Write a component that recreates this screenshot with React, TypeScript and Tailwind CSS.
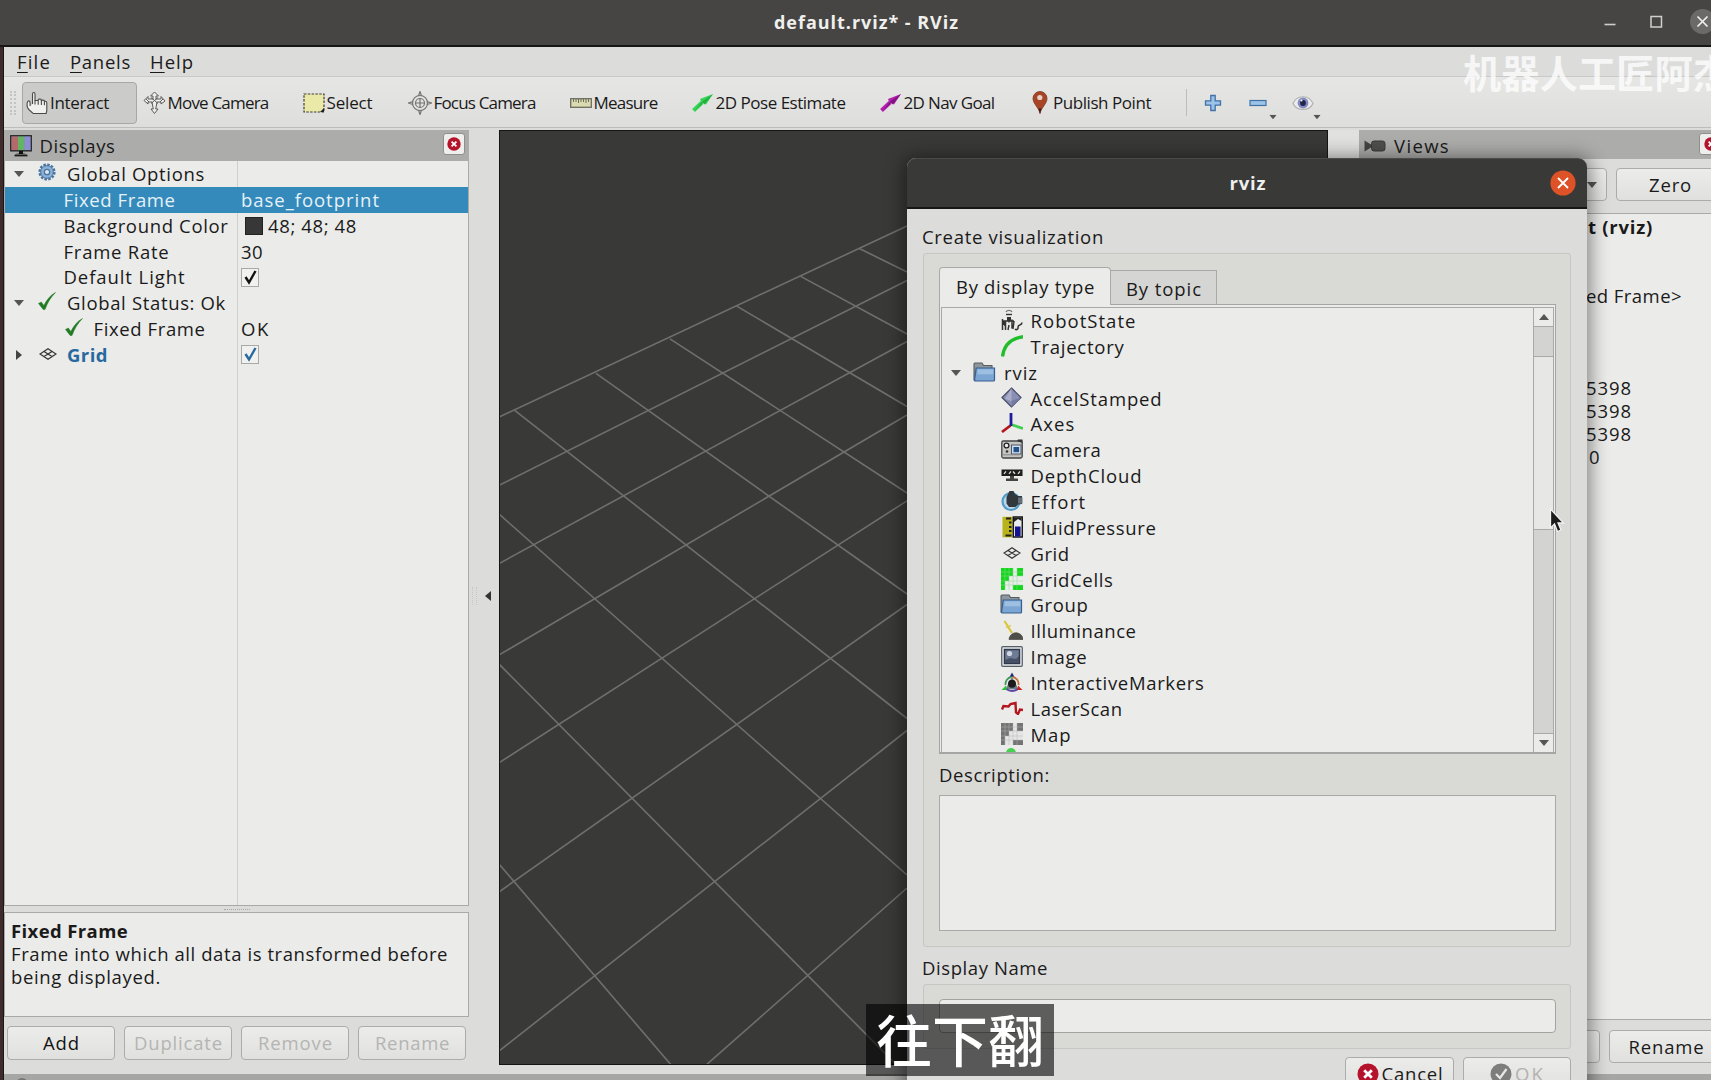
import { useLayoutEffect, useRef, useState } from "react";
import type { ReactNode } from "react";

/** Single-line label whose tracking is adjusted so that it spans a given width. */
function Fit({ w, className = "", children }: { w: number; className?: string; children: ReactNode }) {
  const ref = useRef<HTMLSpanElement>(null);
  const [spacing, setSpacing] = useState(0);
  useLayoutEffect(() => {
    const el = ref.current;
    if (!el) return;
    const count = (el.textContent || "").length;
    if (count > 0) setSpacing((w + 1 - el.getBoundingClientRect().width) / count);
  }, [w]);
  return (
    <span className={"block shrink-0 whitespace-pre " + className} style={{ width: w }}>
      <span ref={ref} className="inline-block" style={{ letterSpacing: spacing }}>
        {children}
      </span>
    </span>
  );
}

const ICON = "block shrink-0";

const HandIcon = () => (
  <svg className={ICON} width="22" height="24" viewBox="0 0 22 24" fill="#f0f0ee" stroke="#4a4a4a" strokeWidth="1.1" strokeLinejoin="round">
    <path d="M6.500 13V3.200C6.500 1 9 1 9 3.200V9.500h3.200v-.8c0-.8 3-.8 3 0v1h.400c0-1 2.800-.8 2.800.2v.5c1-.4 2.400 0 2.400 1.600v7c0 2-.6 2-.6 3.500H7.200C6 21 3 20 1.500 16.500c-.8-2.500-.5-6 .8-6.500 1.200-.400 1.800.500 1.800 2v3" />
    <path d="M9 9.500v4M12.200 9.700v4M15.400 10v4M18.400 10.700v3.500" fill="none" />
  </svg>
);
const MoveIcon = () => (
  <svg className={ICON} width="23" height="23" viewBox="0 0 23 23" fill="#eee" stroke="#5c5c5c" strokeWidth="1" strokeLinejoin="round">
    <path d="M11.500 1l4 4h-2.500v3h5V5.500l4 4.500-4 3V11H14l-1.300 7H15l-3.500 4.500L8 18h2.300L9 11H5v2L1 9.500 5 5.500V8h5V5H7.500z" />
    <path d="M8 6.500l7 6M15 6.500l-7 6M3 8l3 3M20 8l-3 3" fill="none" />
  </svg>
);
const SelectIcon = () => (
  <svg className={ICON} width="22" height="20" viewBox="0 0 22 20">
    <rect x="1" y="1" width="20" height="18" fill="#ebe9a8" stroke="#3c3c3c" strokeWidth="1.200" strokeDasharray="2.500 1.300" />
    <path d="M21 15v4h-4z" fill="#222" />
  </svg>
);
const FocusIcon = () => (
  <svg className={ICON} width="24" height="24" viewBox="0 0 24 24" fill="none" stroke="#747474" strokeWidth="1.200">
    <circle cx="12" cy="12" r="7.500" />
    <circle cx="12" cy="12" r="4.500" />
    <path d="M12 7v10M7 12h10M10.500 5L12 .5 13.500 5M10.500 19l1.500 4.500 1.500-4.500M5 10.500L.5 12 5 13.500M19 10.500l4.500 1.500-4.500 1.500" />
  </svg>
);
const RulerIcon = () => (
  <svg className={ICON} width="22" height="10" viewBox="0 0 22 10">
    <rect x=".7" y=".7" width="20.600" height="8.600" fill="#dadbb0" stroke="#6d6d60" strokeWidth="1.300" />
    <path d="M3.500 1v3M6 1v3M8.500 1v4M11 1v3M13.500 1v3M16 1v4M18.500 1v3" stroke="#6d6d60" strokeWidth="1" />
  </svg>
);
const ArrowIcon = ({ dark, light }: { dark: string; light: string }) => (
  <svg className={ICON} width="22" height="19" viewBox="0 0 22 19">
    <path d="M1.500 17.500L10 9.500" stroke={light} strokeWidth="4" />
    <path d="M8 6L21 1l-7 10.500-2-1-3-2z" fill={light} />
    <path d="M2.500 18.200L11 10l1.500 1.500L21 1 10 8.500z" fill={dark} opacity=".75" />
  </svg>
);
const PinIcon = () => (
  <svg className={ICON} width="16" height="23" viewBox="0 0 16 23">
    <path d="M8 22.500C7 17 1 12.500 1 7.500a7 7 0 0114 0C15 12.500 9 17 8 22.500z" fill="#a84526" stroke="#7c3520" strokeWidth=".8" />
    <path d="M6.500 17.500h3L8 22.500z" fill="#3b1c14" />
    <circle cx="7.800" cy="6.500" r="2.600" fill="#e7cfc8" />
  </svg>
);
const PlusIcon = () => (
  <svg className={ICON} width="18" height="18" viewBox="0 0 18 18">
    <path d="M6.800 1.500h4.400v5.300h5.300v4.400h-5.300v5.300H6.800v-5.300H1.500V6.800h5.300z" fill="#9cc3e8" stroke="#4272a5" strokeWidth="1.300" />
  </svg>
);
const MinusIcon = () => (
  <svg className={ICON} width="18" height="8" viewBox="0 0 18 8">
    <rect x="1" y="1.500" width="16" height="5" fill="#9cc3e8" stroke="#4272a5" strokeWidth="1.200" />
  </svg>
);
const EyeIcon = () => (
  <svg className={ICON} width="22" height="16" viewBox="0 0 22 16">
    <path d="M1 8.500C5-.5 17-.5 21 8.500 17 16.500 5 16.500 1 8.500z" fill="#ececec" stroke="#b0b0b0" strokeWidth="1.200" />
    <circle cx="11" cy="8" r="5.400" fill="#8288c0" />
    <circle cx="11" cy="8" r="2.900" fill="#22264a" />
    <circle cx="9.500" cy="5.600" r="1" fill="#fff" />
  </svg>
);
const Caret = ({ className = "" }: { className?: string }) => (
  <svg className={"block shrink-0 " + className} width="10" height="6" viewBox="0 0 10 6">
    <path d="M0 0h10L5 6z" fill="#555" />
  </svg>
);
const MonitorIcon = () => (
  <svg className={ICON} width="22" height="22" viewBox="0 0 22 22">
    <rect x=".8" y=".8" width="20.400" height="15" fill="#7f7fb4" stroke="#222" strokeWidth="1.400" />
    <rect x="1.500" y="1.500" width="6.500" height="13.600" fill="#b36a6a" />
    <rect x="8" y="1.500" width="6.500" height="13.600" fill="#63b463" />
    <rect x="14.500" y="1.500" width="6" height="13.600" fill="#8d8dd2" />
    <path d="M9 16h4v2.500c3 0 4.500 1 4.500 1H4.500S6 18.500 9 18.500z" fill="#111" />
    <path d="M4.500 20.700h13" stroke="#111" strokeWidth="1.300" />
  </svg>
);
const GearIcon = () => (
  <svg className={ICON} width="18" height="18" viewBox="0 0 18 18">
    <circle cx="9" cy="9" r="7.300" fill="none" stroke="#48759f" strokeWidth="2.600" strokeDasharray="2.500 1.320" />
    <circle cx="9" cy="9" r="6.300" fill="#8db1d8" stroke="#48759f" strokeWidth="1" />
    <circle cx="9" cy="9" r="2.700" fill="#dce6ef" stroke="#48759f" strokeWidth="1.300" />
  </svg>
);
const TickIcon = () => (
  <svg className={ICON} width="18" height="18" viewBox="0 0 18 18">
    <path d="M.5 11.500l2.800-1.500 2.500 3.500C9 7.500 12.500 3 17.500.5 13 5 9.500 10.500 7 17.500H5.200z" fill="#217a24" stroke="#217a24" strokeWidth=".5" />
  </svg>
);
const GridIcon = () => (
  <svg className={ICON} width="18" height="12" viewBox="0 0 18 12" fill="none" stroke="#333" strokeWidth="1.200">
    <path d="M9 .800L17 6 9 11.200 1 6zM5 3.400l8 5.200M13 3.400L5 8.600" />
  </svg>
);
const CloseDot = ({ size }: { size: number }) => (
  <svg className={ICON} width={size} height={size} viewBox="0 0 22 22">
    <circle cx="11" cy="11" r="10.500" fill="#b5122b" />
    <path d="M7.200 7.200l7.600 7.600M14.800 7.200l-7.600 7.600" stroke="#fff" strokeWidth="2.800" />
  </svg>
);
const CamcorderIcon = () => (
  <svg className={ICON} width="22" height="14" viewBox="0 0 22 14">
    <path d="M.5 1.500l6.500 4v3l-6.500 4z" fill="#444" />
    <rect x="7.500" y="2" width="13.500" height="10" rx="2.500" fill="#4f4f4d" stroke="#3a3a3a" />
  </svg>
);
const FolderIcon = () => (
  <svg className={ICON} width="23" height="20" viewBox="0 0 23 20">
    <path d="M1 18.500V2c0-.6.400-1 1-1h7l1.500 2.500H19V8" fill="#8f969c" stroke="#555c62" strokeWidth="1.100" />
    <path d="M3.200 6h18.300v12c0 .6-.4 1-1 1H3c-1 0-1.500-.5-1.500-.5z" fill="#7ba6d4" stroke="#355f8e" strokeWidth="1.200" />
    <path d="M4.500 7.300h15.800v5H4.500z" fill="#9dbfe2" />
  </svg>
);

const rowIcons: Record<string, ReactNode> = {
  RobotState: (
    <svg width="22" height="22" viewBox="0 0 22 22" fill="none" stroke="#333" strokeWidth="1.500">
      <path d="M5 3C6 .8 10 .8 11 3" stroke="#777" strokeWidth="1.300" />
      <path d="M5 5.500h6" strokeWidth="1.400" />
      <path d="M1.500 10v11M4.500 12v9M8 8.500v5M11 10.500v9M13 12l-1 8M2 12h11M3 16h2M8 16l-1 5M14 20c1.500 1.500 3.500 0 3-2 0-3 4-1 4-4.500" />
      <path d="M6 8h4v4H6zM1 12h3v4H1z" fill="#333" stroke="none" />
    </svg>
  ),
  Trajectory: (
    <svg width="22" height="22" viewBox="0 0 22 22" fill="none">
      <path d="M1.500 21.500C3 10.500 9 3.500 22 1.800" stroke="#22bd2b" strokeWidth="3.400" />
    </svg>
  ),
  AccelStamped: (
    <svg width="22" height="22" viewBox="0 0 22 22">
      <path d="M10.500 1L20 10.500 10.500 20 1 10.500z" fill="#8a8fb4" stroke="#454a63" strokeWidth="1.200" />
      <path d="M10.500 1L4 12l6.500 2z" fill="#a9adca" />
      <path d="M10.500 14L20 10.500 10.500 20z" fill="#747aa3" />
    </svg>
  ),
  Axes: (
    <svg width="22" height="22" viewBox="0 0 22 22" fill="none" strokeWidth="2.800">
      <path d="M9.500 13.500L1 20" stroke="#b5141d" />
      <path d="M10 12.500L22 16.500" stroke="#42ce4e" />
      <path d="M10 1v13" stroke="#1d1d9c" />
    </svg>
  ),
  Camera: (
    <svg width="22" height="20" viewBox="0 0 22 20">
      <rect x=".8" y="2" width="20.400" height="17" rx="1.500" fill="#c4c6c4" stroke="#444" strokeWidth="1.300" />
      <path d="M16 2l1-1.500h4.500V4z" fill="#333" />
      <circle cx="5.500" cy="6.500" r="2.400" fill="#eee" stroke="#222" strokeWidth="1.300" />
      <circle cx="6" cy="12.500" r="1.300" fill="#333" />
      <rect x="10.500" y="6" width="9.500" height="9" fill="#cfe1ee" stroke="#556" />
      <rect x="12.500" y="8" width="5.600" height="5.200" fill="#23528c" />
      <path d="M2 15.800h17" stroke="#888" />
    </svg>
  ),
  DepthCloud: (
    <svg width="22" height="13" viewBox="0 0 22 13">
      <rect x=".5" y=".5" width="21" height="6.500" fill="#1d1d1d" />
      <path d="M3 4.800l2-2.500M8 4.800l2-2.500M12 2.500l2 2.300M17 4.800l2-2.500" stroke="#ddd" strokeWidth="1.300" />
      <path d="M9 7h4v2.500h4V12H5V9.500h4z" fill="#444" />
    </svg>
  ),
  Effort: (
    <svg width="22" height="22" viewBox="0 0 22 22">
      <circle cx="10" cy="11.500" r="8.500" fill="#b9d7e8" stroke="#4f9ccb" strokeWidth="2.200" />
      <path d="M7 4l1.500-3h4l1.500 3 3 2h4v8l-4 .5-2.500 2.500h-6.500L5.500 13.500V7z" fill="#33383c" />
      <path d="M17 7.500h4.500v6H17z" fill="#65727b" />
    </svg>
  ),
  FluidPressure: (
    <svg width="22" height="22" viewBox="0 0 22 22">
      <rect x="1.500" y=".8" width="10" height="20.500" fill="#b9b31b" />
      <path d="M5 2.500h5M8 6.500h2.500M8 11h2.500M8 15h2.500M4.500 19.500h6" stroke="#222" strokeWidth="2" />
      <rect x="12.300" y="1" width="9" height="20" fill="#e9e9ee" stroke="#181818" strokeWidth="1.500" />
      <rect x="14" y="10.500" width="5.600" height="10" fill="#14148f" />
      <path d="M13 1.500h7.600v3.500L17 3l-4 3z" fill="#222" />
    </svg>
  ),
  Grid: <GridIcon />,
  GridCells: (
    <svg width="22" height="22" viewBox="0 0 22 22">
      <rect width="22" height="22" fill="#e8efe8" />
      <path d="M0 0h12v8H8v5H4v9H0zM16 0h6v8h-6zM12 17h10v5H12z" fill="#12d91c" />
      <path d="M4 0v22M8 0v22M12 0v22M16 0v22M0 4h22M0 8h22M0 13h22M0 17h22" stroke="#9ccf9f" strokeWidth=".7" opacity=".7" />
    </svg>
  ),
  Group: <FolderIcon />,
  Illuminance: (
    <svg width="22" height="20" viewBox="0 0 22 20">
      <path d="M3.500 1L11 13" stroke="#d9c63c" strokeWidth="2.200" />
      <path d="M5 7.500l5-2" stroke="#d9c63c" strokeWidth="1.200" />
      <path d="M8 19.500c0-2 1.500-5 4-6 1.500-1 4-1 6 0 2 .8 4 3 4 6z" fill="#4f4f4a" stroke="#3a3a36" strokeWidth=".6" />
    </svg>
  ),
  Image: (
    <svg width="22" height="21" viewBox="0 0 22 21">
      <rect x=".7" y=".7" width="20.600" height="19.600" rx="1" fill="#dfe2e6" stroke="#555d66" strokeWidth="1.200" />
      <rect x="3.500" y="3.500" width="15" height="14" fill="#6f7b94" stroke="#2f3846" strokeWidth="1.400" />
      <circle cx="8.500" cy="7.500" r="2.600" fill="#cfd7e4" />
      <path d="M4 14l5-2 6 1 3-3v7H4z" fill="#454f65" />
    </svg>
  ),
  InteractiveMarkers: (
    <svg width="22" height="20" viewBox="0 0 22 20" fill="none">
      <path d="M11 .5L8.500 5h5z" fill="#23237c" />
      <path d="M11 5L4.500 17h13z" fill="#6f7f86" />
      <path d="M4.500 13a7 7 0 016-8" stroke="#3f9a5c" strokeWidth="1.800" />
      <path d="M17.500 13a7 7 0 00-6-8" stroke="#c2743c" strokeWidth="1.800" />
      <path d="M5 17c4 2.500 8 2.500 12 0" stroke="#5b46a0" strokeWidth="2" />
      <circle cx="11" cy="11.800" r="4" fill="#1b1b1b" />
      <path d="M5 13.500l-4.500 4.500h5z" fill="#24c531" />
      <path d="M17 13.500l4.500 4.500h-5z" fill="#d22020" />
    </svg>
  ),
  LaserScan: (
    <svg width="22" height="14" viewBox="0 0 22 14" fill="none" stroke="#b3161d" strokeWidth="2.400">
      <path d="M1 8.500L2.500 5l5 .5 2-2.500 5-1 .5 9.500 2 1.500 2-4.500 3 .5" />
    </svg>
  ),
  Map: (
    <svg width="22" height="22" viewBox="0 0 22 22">
      <rect width="22" height="22" fill="#e6e6e6" />
      <path d="M0 0h12v8H8v5H4v9H0zM16 0h6v8h-6zM12 17h10v5H12z" fill="#747474" />
      <path d="M4 0v22M8 0v22M12 0v22M16 0v22M0 4h22M0 8h22M0 13h22M0 17h22" stroke="#b5b5b5" strokeWidth=".7" opacity=".7" />
    </svg>
  ),
};

const tools: { label: string; w: number; gap: number; icon: ReactNode; iconBox: string; width: string }[] = [
  { label: "Move Camera", w: 100, gap: 3, icon: <MoveIcon />, iconBox: "w-[23px]", width: "w-[160px]" },
  { label: "Select", w: 45, gap: 3, icon: <SelectIcon />, iconBox: "w-[22px]", width: "w-[105px]" },
  { label: "Focus Camera", w: 101, gap: 3, icon: <FocusIcon />, iconBox: "w-[24px]", width: "w-[162px]" },
  { label: "Measure", w: 63, gap: 3, icon: <RulerIcon />, iconBox: "w-[22px]", width: "w-[122px]" },
  { label: "2D Pose Estimate", w: 129, gap: 3, icon: <ArrowIcon dark="#1fa63a" light="#35d455" />, iconBox: "w-[22px]", width: "w-[188px]" },
  { label: "2D Nav Goal", w: 90, gap: 3, icon: <ArrowIcon dark="#6d0f6b" light="#b31fb0" />, iconBox: "w-[22px]", width: "w-[152px]" },
  { label: "Publish Point", w: 97, gap: 6, icon: <PinIcon />, iconBox: "w-[16px]", width: "w-[154px]" },
];

const items: [string, number][] = [
  ["AccelStamped", 131], ["Axes", 44], ["Camera", 70], ["DepthCloud", 111], ["Effort", 55],
  ["FluidPressure", 125], ["Grid", 38], ["GridCells", 82], ["Group", 57], ["Illuminance", 105],
  ["Image", 56], ["InteractiveMarkers", 173], ["LaserScan", 91], ["Map", 40],
];

const cellLines = [
  [0, 286, 408, 95], [0, 354.4, 408, 149.500], [0, 432.600, 408, 210.500], [0, 524, 408, 284],
  [0, 631.800, 408, 369.800], [0, 760.900, 408, 473.500], [0, 920, 408, 599.500], [206, 935, 408, 757],
  [360.300, 117.500, 408, 141], [301.700, 145.400, 408, 203], [237.700, 175.100, 408, 275.500],
  [171, 207.800, 408, 362], [97, 242.400, 408, 463], [15.700, 279.300, 408, 587.500],
  [0, 383, 408, 744], [0, 533, 408, 944.500], [0, 733, 173, 935],
];

function Item({ name, w }: { name: string; w: number }) {
  return (
    <div className="flex h-[25.86px] items-center pl-[58px]">
      <span className="flex w-[23px] shrink-0 -translate-y-px justify-center">{rowIcons[name]}</span>
      <Fit w={w} className="ml-[7.5px]">{name}</Fit>
    </div>
  );
}

function Checkbox({ color }: { color: string }) {
  return (
    <span className="flex h-[19px] w-[18px] items-center justify-center border border-[#a9a9a7] bg-[#f1f1ef]">
      <svg width="13" height="15" viewBox="0 0 13 15" fill="none" stroke={color} strokeWidth="2.400">
        <path d="M1.500 7l3.500 5.500L11.500 1" />
      </svg>
    </span>
  );
}

function Row({ left, right, selected = false }: { left: ReactNode; right?: ReactNode; selected?: boolean }) {
  return (
    <div className={"flex h-[25.86px] shrink-0 " + (selected ? "bg-[#348abb] text-[#e6f1f7]" : "")}>
      <div className={"flex w-[233px] shrink-0 items-center border-r " + (selected ? "border-[#348abb]" : "border-[#cfcfcd]")}>{left}</div>
      <div className="flex flex-1 items-center pl-[3px]">{right}</div>
    </div>
  );
}

const btn = "flex items-center justify-center rounded-[4px] border border-[#acacaa] bg-gradient-to-b from-[#ececea] to-[#e0e0de]";

function MainTree() {
  return (
    <div className="flex h-[745px] flex-col border border-t-0 border-[#a9a9a7] bg-[#ebebe9]">
      <Row left={<><Caret className="ml-[9px]" /><span className="ml-[14px] flex -translate-y-0.5"><GearIcon /></span><Fit w={137} className="ml-[11px]">Global Options</Fit></>} />
      <Row selected left={<Fit w={111} className="ml-[58.5px]">Fixed Frame</Fit>} right={<Fit w={138}>base_footprint</Fit>} />
      <Row left={<Fit w={164} className="ml-[58.5px]">Background Color</Fit>} right={<><span className="ml-[4px] size-[18px] border border-[#222] bg-[#373737]" /><Fit w={88} className="ml-[5px]">48; 48; 48</Fit></>} />
      <Row left={<Fit w={105} className="ml-[58.5px]">Frame Rate</Fit>} right={<Fit w={21}>30</Fit>} />
      <Row left={<Fit w={121} className="ml-[58.5px]">Default Light</Fit>} right={<Checkbox color="#111" />} />
      <Row left={<><Caret className="ml-[9px]" /><span className="ml-[14px] flex -translate-y-0.5"><TickIcon /></span><Fit w={158} className="ml-[11px]">Global Status: Ok</Fit></>} />
      <Row left={<><span className="ml-[60px] flex -translate-y-0.5"><TickIcon /></span><Fit w={111} className="ml-[10.5px]">Fixed Frame</Fit></>} right={<Fit w={28}>OK</Fit>} />
      <Row
        left={<>
          <svg className="ml-[11px] shrink-0" width="6" height="10" viewBox="0 0 6 10"><path d="M0 0l6 5-6 5z" fill="#444" /></svg>
          <span className="ml-[17px] flex -translate-y-px"><GridIcon /></span>
          <Fit w={40} className="ml-[10px] font-bold text-[#27699f]">Grid</Fit>
        </>}
        right={<Checkbox color="#27699f" />}
      />
      <div className="w-[233px] flex-1 border-r border-[#cfcfcd]" />
    </div>
  );
}

function DisplaysDock() {
  return (
    <section className="flex w-[465px] shrink-0 flex-col">
      <header className="flex h-[31px] items-center bg-[#acacaa] pl-[6px] pr-1">
        <MonitorIcon />
        <Fit w={75} className="ml-[7.5px]">Displays</Fit>
        <span className="-mt-1 ml-auto flex h-[22px] w-[22px] items-center justify-center rounded-[3px] border border-[#8f8f8d] bg-[#eeeeec]">
          <CloseDot size={14} />
        </span>
      </header>
      <MainTree />
      <div className="flex h-[6px] items-center justify-center">
        <div className="h-px w-[26px] border-t border-dotted border-[#a8a8a6]" />
      </div>
      <div className="h-[105px] border border-[#a9a9a7] bg-[#ebebe9] pl-[6px] pt-[6px] leading-[23px]">
        <Fit w={116} className="font-bold">Fixed Frame</Fit>
        <Fit w={436}>Frame into which all data is transformed before</Fit>
        <Fit w={149}>being displayed.</Fit>
      </div>
      <div className="mt-[9px] flex gap-[9px] pl-[3px] text-[#b4b4b2]">
        <div className={btn + " h-[34px] w-[108px] text-[#141414]"}><Fit w={36}>Add</Fit></div>
        <div className={btn + " h-[34px] w-[108px]"}><Fit w={88}>Duplicate</Fit></div>
        <div className={btn + " h-[34px] w-[108px]"}><Fit w={74}>Remove</Fit></div>
        <div className={btn + " h-[34px] w-[108px]"}><Fit w={74}>Rename</Fit></div>
      </div>
    </section>
  );
}

function ViewsDock() {
  return (
    <section className="flex w-[352px] shrink-0 flex-col">
      <header className="flex h-[29px] items-center bg-[#acacaa] pl-[5px] pt-0.5">
        <CamcorderIcon />
        <Fit w={55} className="ml-[8px]">Views</Fit>
        <span className="-mt-1 ml-auto -mr-[12px] flex h-[22px] w-[24px] shrink-0 items-center justify-center rounded-[3px] border border-[#8f8f8d] bg-[#eeeeec]">
          <CloseDot size={14} />
        </span>
      </header>
      <div className="flex h-[54px] gap-[9px] pt-[9px]">
        <div className={btn + " h-[33px] w-[248px] shrink-0 justify-end! pr-[9px]"}><Caret /></div>
        <div className={btn + " h-[33px] w-[108px] shrink-0"}><Fit w={42}>Zero</Fit></div>
      </div>
      <div className="h-[807px] border-y border-[#a9a9a7] bg-[#ebebe9] pl-[227px] pt-px leading-[23px]">
        <div className="h-[69px]"><Fit w={64} className="ml-[2px] font-bold">t (rviz)</Fit></div>
        <div className="h-[92px]"><Fit w={95}>{"ed Frame>"}</Fit></div>
        <Fit w={45}>5398</Fit>
        <Fit w={45}>5398</Fit>
        <Fit w={45}>5398</Fit>
        <Fit w={10} className="ml-[3px]">0</Fit>
      </div>
      <div className="flex gap-[9px] pt-[10px]">
        <div className={btn + " h-[33px] w-[241px] shrink-0"} />
        <div className={btn + " h-[33px] w-[114px] shrink-0"}><Fit w={75}>Rename</Fit></div>
      </div>
    </section>
  );
}

function Viewport() {
  return (
    <div className="h-[935px] w-[829px] shrink-0 overflow-hidden border border-[#151515] bg-[#393937]">
      <svg className="-ml-px" width="827" height="934" viewBox="0 0 827 934" stroke="#6f6f6d" strokeWidth="1.600">
        {cellLines.map(([x1, y1, x2, y2], i) => (
          <line key={i} x1={x1} y1={y1} x2={x2} y2={y2} />
        ))}
      </svg>
    </div>
  );
}

function Dialog() {
  return (
    <div className="absolute left-[907px] top-[158px] flex h-[940px] w-[680px] flex-col rounded-t-[9px] bg-[#dcdcdb] shadow-[0_2px_18px_4px_rgba(0,0,0,0.42)]">
      <header className="flex h-[51px] shrink-0 items-center justify-center rounded-t-[9px] border-b-2 border-t border-b-[#161616] border-t-[#4a4a48] bg-[#393937] text-[#efefed]">
        <Fit w={36} className="ml-[1px] font-bold">rviz</Fit>
        <svg className="absolute right-[11px] top-[12px]" width="26" height="26" viewBox="0 0 26 26">
          <circle cx="13" cy="13" r="12.600" fill="#dd5226" />
          <path d="M8 8l10 10M18 8L8 18" stroke="#fff" strokeWidth="1.800" />
        </svg>
      </header>
      <div className="flex flex-col px-4">
        <div className="-ml-px flex h-[44px] items-center pt-[11px]"><Fit w={181}>Create visualization</Fit></div>
        <div className="flex h-[694px] w-[648px] flex-col rounded-[3px] border border-[#c6c6c4] bg-[#d9d9d6] px-[15px] pt-[13px]">
          <div className="flex h-[37px] items-end">
            <div className="relative z-10 -mb-px flex h-[38px] w-[172px] items-center justify-center rounded-t-[4px] border border-b-0 border-[#a9a9a7] bg-[#ebebe9] pt-px"><Fit w={138}>By display type</Fit></div>
            <div className="flex h-[34px] w-[106px] items-center justify-center border border-b-0 border-l-0 border-[#a9a9a7] bg-[#d5d5d3] pt-0.5"><Fit w={75}>By topic</Fit></div>
          </div>
          <div className="h-[450px] w-[617px] border border-b-2 border-[#a5a5a3] bg-[#ebebe9] px-px pt-[2px]">
            <div className="flex h-[445px] border border-b-0 border-[#a9a9a7]">
              <div className="flex-1 overflow-hidden">
                <Item name="RobotState" w={105} />
                <Item name="Trajectory" w={93} />
                <div className="flex h-[25.86px] items-center pl-[9px]">
                  <Caret /><span className="ml-[12px] flex -translate-y-px"><FolderIcon /></span><Fit w={33} className="ml-[8px]">rviz</Fit>
                </div>
                {items.map(([name, w]) => <Item key={name} name={name} w={w} />)}
                <div className="ml-[64px] h-[10px] w-[10px] rounded-full bg-[#46d250]" />
              </div>
              <div className="flex w-[20px] flex-col border-l border-[#a9a9a7] bg-[#d3d3d1]">
                <div className="flex h-[19px] items-center justify-center border-b border-[#a9a9a7] bg-[#ebebe9]"><Caret className="rotate-180" /></div>
                <div className="mt-[29px] h-[174px] border-y border-[#a9a9a7] bg-[#e7e7e5]" />
                <div className="mt-auto flex h-[19px] items-center justify-center border-t border-[#a9a9a7] bg-[#ebebe9]"><Caret /></div>
              </div>
            </div>
          </div>
          <div className="flex h-[41px] items-center pt-px"><Fit w={110}>Description:</Fit></div>
          <div className="h-[136px] w-[617px] border border-[#a9a9a7] bg-[#ebebe9]" />
        </div>
        <div className="-ml-px flex h-[37px] items-center pt-[5px]"><Fit w={125}>Display Name</Fit></div>
        <div className="h-[65px] w-[648px] rounded-[3px] border border-[#c6c6c4] bg-[#d9d9d6] px-[15px] pt-[14px]">
          <div className="h-[34px] w-[617px] rounded-[4px] border border-[#a3a3a1] bg-[#ebebe9]" />
        </div>
        <div className="mt-[8px] flex justify-end gap-[9px]">
          <div className={btn + " h-[34px] w-[109px] gap-[3px]"}><CloseDot size={22} /><Fit w={61}>Cancel</Fit></div>
          <div className={btn + " h-[34px] w-[108px] gap-[3px] text-[#b2b2b0]"}>
            <svg width="22" height="22" viewBox="0 0 22 22"><circle cx="11" cy="11" r="10.500" fill="#7e7e7c" /><path d="M6 11l4 4 6.500-9" stroke="#e8e8e6" strokeWidth="2.200" fill="none" /></svg>
            <Fit w={29}>OK</Fit>
          </div>
        </div>
      </div>
    </div>
  );
}

export default function App() {
  return (
    <div className="relative flex h-[1080px] w-[1711px] flex-col overflow-hidden bg-[#dcdcdb] font-['Open_Sans','Noto_Sans_CJK_SC',sans-serif] text-[18.5px] leading-[24px] text-[#1a1a1a]">
      <header className="flex h-[47px] shrink-0 items-center border-b-2 border-[#161616] bg-[#464543] text-[#efefed]">
        <Fit w={184} className="-mt-0.5 ml-[774px] text-[18px] font-bold">default.rviz* - RViz</Fit>
        <svg className="-mt-0.5 ml-auto shrink-0" width="108" height="28" viewBox="0 0 108 28" fill="none">
          <path d="M1.500 16.500h11" stroke="#cfcfcd" strokeWidth="1.600" />
          <rect x="48" y="8.500" width="10.500" height="10.500" stroke="#cfcfcd" strokeWidth="1.500" />
          <circle cx="99.500" cy="13.500" r="12.500" fill="#6b6a68" />
          <path d="M94.500 8.500l10 10M104.500 8.500L94.500 18.500" stroke="#efefed" strokeWidth="1.700" />
        </svg>
      </header>
      <div className="flex min-h-0 flex-1">
        <div className="w-1 shrink-0 border-r border-[#1d1616] bg-[#3f2a2c]" />
        <div className="flex w-[1707px] shrink-0 flex-col">
          <nav className="flex h-[30px] shrink-0 items-center border-b border-[#c9c9c7] pl-[13px] underline-offset-[3px]">
            <Fit w={33}><u>F</u>ile</Fit>
            <Fit w={60} className="ml-[20px]"><u>P</u>anels</Fit>
            <Fit w={43} className="ml-[20px]"><u>H</u>elp</Fit>
          </nav>
          <div className="flex h-[51px] shrink-0 items-center border-b border-[#bdbdbb] bg-gradient-to-b from-[#e6e6e4] to-[#dededc] pl-[6px] pt-px text-[17px]">
            <div className="h-[24px] w-[6px] border-x-2 border-dotted border-[#c3c3c1]" />
            <div className="ml-[6px] flex h-[42px] w-[115px] shrink-0 items-center rounded-[4px] border border-[#a7a7a5] bg-[#cbcbc9] pl-[3px]">
              <HandIcon /><Fit w={58} className="ml-[2px]">Interact</Fit>
            </div>
            <div className="ml-[6px] flex items-center">
              {tools.map((t) => (
                <div key={t.label} className={"flex shrink-0 items-center " + t.width}>
                  <span className={"shrink-0 " + t.iconBox}>{t.icon}</span>
                  <Fit w={t.w} className={t.gap === 3 ? "ml-[1.500px]" : "ml-[5px]"}>{t.label}</Fit>
                </div>
              ))}
            </div>
            <div className="h-[27px] w-px shrink-0 bg-[#bcbcba]" />
            <div className="ml-[17px] flex shrink-0 items-center">
              <PlusIcon />
              <span className="ml-[27px]"><MinusIcon /></span>
              <Caret className="ml-px mt-[29px] scale-75" />
              <span className="ml-[14px]"><EyeIcon /></span>
              <Caret className="-ml-0.5 mt-[29px] scale-75" />
            </div>
          </div>
          <div className="flex h-[946px] shrink-0 pt-[2px]">
            <DisplaysDock />
            <div className="flex w-[30px] shrink-0 items-center pb-[12px]">
              <div className="ml-[3px] h-[18px] w-[5px] border-x border-dotted border-[#c6c6c4]" />
              <svg className="ml-[8px]" width="6" height="10" viewBox="0 0 6 10"><path d="M6 0v10L0 5z" fill="#333" /></svg>
            </div>
            <Viewport />
            <div className="w-[31px] shrink-0 bg-[#e1e1df]" />
            <ViewsDock />
          </div>
          <div className="h-[6px] shrink-0 overflow-hidden bg-[#a6a6a4] pl-[12px] pt-1"><div className="h-2 w-3 rounded-t-full bg-[#777779]" /></div>
        </div>
      </div>

      <Dialog />

      <div className="pointer-events-none absolute left-[1463px] top-[43.5px] whitespace-nowrap font-['Noto_Sans_CJK_SC',sans-serif] text-[38.3px] font-bold leading-[56px] text-white/75">机器人工匠阿杰</div>
      <div className="absolute left-[866px] top-[1004px] flex h-[72px] w-[188px] items-center justify-center bg-black/60 pb-1 font-['Noto_Sans_CJK_SC',sans-serif] text-[56px] font-medium leading-[68px] text-white">往下翻</div>
      <svg className="absolute left-[1549px] top-[507px]" width="18" height="28" viewBox="0 0 18 28">
        <path d="M1.500 2v19l4-4 3 7.500 3.500-1.500-3-7h5.500z" fill="#1c1c1c" stroke="#f2f2f2" strokeWidth="1.300" />
      </svg>
    </div>
  );
}
